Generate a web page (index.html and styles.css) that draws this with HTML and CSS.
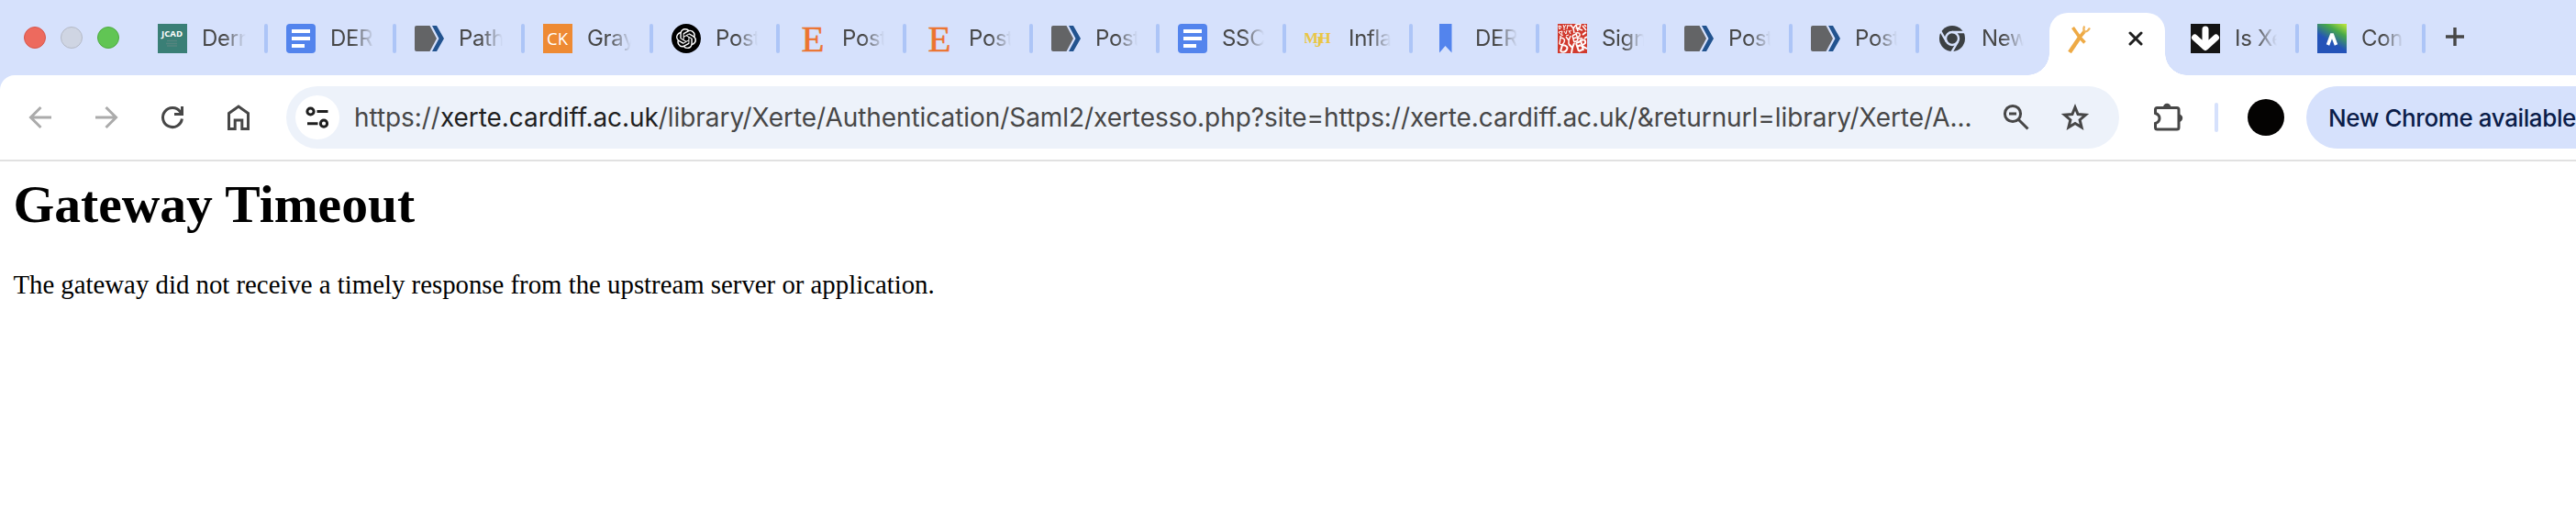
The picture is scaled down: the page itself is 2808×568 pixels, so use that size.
FILE: index.html
```html
<!DOCTYPE html>
<html lang="en">

<head>
    <meta charset="UTF-8" />
    <title>504 Gateway Timeout</title>
    <link rel="stylesheet" href="styles.css">
</head>

<body>
    <!-- icons used by more than one tab -->
    <svg class="defs" width="0" height="0">
        <symbol id="docs" viewBox="0 0 32 32">
            <rect width="32" height="32" rx="4" fill="#5384ed" />
            <path d="M6 8h20M6 16h20M6 24h14" stroke="#fff" stroke-width="4" />
        </symbol>
        <symbol id="pathway" viewBox="0 0 32 32">
            <path d="M2 2h14.500l7.500 14-7.500 14H2a2 2 0 0 1-2-2V4a2 2 0 0 1 2-2z" fill="#636466" />
            <path d="M19 2h5l8 14-8 14h-5l7.500-14z" fill="#22538f" />
        </symbol>
    </svg>

    <div class="tabStrip">
        <div class="windowButtons">
            <span class="light red"></span>
            <span class="light grey"></span>
            <span class="light green"></span>
        </div>
        <div class="tab wide">
            <svg class="favicon" viewBox="0 0 32 32">
                <rect width="32" height="32" fill="#3a7f76" />
                <text class="jcad" x="4" y="13.500" textLength="23" lengthAdjust="spacingAndGlyphs">JCAD</text>
                <path d="M10 18.500h11M9 21.500h12M10 24h11" stroke="#55857f" stroke-width="1.500" />
            </svg>
            <span class="title">Derm</span>
        </div>
        <div class="tab wide">
            <svg class="favicon"><use href="#docs" /></svg>
            <span class="title">DER</span>
        </div>
        <div class="tab wide">
            <svg class="favicon"><use href="#pathway" /></svg>
            <span class="title">Path</span>
        </div>
        <div class="tab wide">
            <svg class="favicon" viewBox="0 0 32 32">
                <rect width="32" height="32" fill="#ee8a33" />
                <text class="ck" x="4" y="22.500" textLength="23" lengthAdjust="spacingAndGlyphs">CK</text>
            </svg>
            <span class="title">Gray</span>
        </div>
        <div class="tab">
            <svg class="favicon" viewBox="0 0 32 32">
                <circle cx="16" cy="16" r="16" />
                <path fill="#fff" transform="translate(5 5) scale(.92)" d="M22.2819 9.8211a5.9847 5.9847 0 0 0-.5157-4.9108 6.0462 6.0462 0 0 0-6.5098-2.9A6.0651 6.0651 0 0 0 4.9807 4.1818a5.9847 5.9847 0 0 0-3.9977 2.9 6.0462 6.0462 0 0 0 .7427 7.0966 5.98 5.98 0 0 0 .511 4.9107 6.051 6.051 0 0 0 6.5146 2.9001A5.9847 5.9847 0 0 0 13.2599 24a6.0557 6.0557 0 0 0 5.7718-4.2058 5.9894 5.9894 0 0 0 3.9977-2.9001 6.0557 6.0557 0 0 0-.7475-7.0729zm-9.022 12.6081a4.4755 4.4755 0 0 1-2.8764-1.0408l.1419-.0804 4.7783-2.7582a.7948.7948 0 0 0 .3927-.6813v-6.7369l2.02 1.1686a.071.071 0 0 1 .038.052v5.5826a4.504 4.504 0 0 1-4.4945 4.4944zm-9.6607-4.1254a4.4708 4.4708 0 0 1-.5346-3.0137l.142.0852 4.783 2.7582a.7712.7712 0 0 0 .7806 0l5.8428-3.3685v2.3324a.0804.0804 0 0 1-.0332.0615L9.74 19.9502a4.4992 4.4992 0 0 1-6.1408-1.6464zM2.3408 7.8956a4.485 4.485 0 0 1 2.3655-1.9728V11.6a.7664.7664 0 0 0 .3879.6765l5.8144 3.3543-2.0201 1.1685a.0757.0757 0 0 1-.071 0l-4.8303-2.7865A4.504 4.504 0 0 1 2.3408 7.872zm16.5963 3.8558L13.1038 8.364 15.1192 7.2a.0757.0757 0 0 1 .071 0l4.8303 2.7913a4.4944 4.4944 0 0 1-.6765 8.1042v-5.6772a.79.79 0 0 0-.407-.667zm2.0107-3.0231l-.142-.0852-4.7735-2.7818a.7759.7759 0 0 0-.7854 0L9.409 9.2297V6.8974a.0662.0662 0 0 1 .0284-.0615l4.8303-2.7866a4.4992 4.4992 0 0 1 6.6802 4.66zM8.3065 12.863l-2.02-1.1638a.0804.0804 0 0 1-.038-.0567V6.0742a4.4992 4.4992 0 0 1 7.3757-3.4537l-.142.0805L8.704 5.459a.7948.7948 0 0 0-.3927.6813zm1.0976-2.3654l2.602-1.4998 2.6069 1.4998v2.9994l-2.5974 1.4997-2.6067-1.4997Z" />
            </svg>
            <span class="title">Post</span>
        </div>
        <div class="tab">
            <svg class="favicon" viewBox="0 0 32 32"><text class="elsevier" x="3.500" y="30" textLength="25" lengthAdjust="spacingAndGlyphs">E</text></svg>
            <span class="title">Post</span>
        </div>
        <div class="tab">
            <svg class="favicon" viewBox="0 0 32 32"><text class="elsevier" x="3.500" y="30" textLength="25" lengthAdjust="spacingAndGlyphs">E</text></svg>
            <span class="title">Post</span>
        </div>
        <div class="tab">
            <svg class="favicon"><use href="#pathway" /></svg>
            <span class="title">Post</span>
        </div>
        <div class="tab">
            <svg class="favicon"><use href="#docs" /></svg>
            <span class="title">SSC</span>
        </div>
        <div class="tab">
            <svg class="favicon" viewBox="0 0 32 32">
                <text class="mjh" x="-1" y="21">M</text>
                <text class="mjh" x="11" y="25">J</text>
                <text class="mjh" x="15.500" y="21">H</text>
            </svg>
            <span class="title">Infla</span>
        </div>
        <div class="tab">
            <svg class="favicon" viewBox="0 0 32 32"><path d="M9 0h13.500v31.500L15.500 24 9 31.500z" fill="#5384ed" /></svg>
            <span class="title">DER</span>
        </div>
        <div class="tab">
            <svg class="favicon" viewBox="0 0 32 32">
                <rect width="32" height="32" fill="#d13a2e" />
                <!-- scattered letters -->
                <g fill="none" stroke="#fff" stroke-width="1.500">
                    <path d="M1 2l3 1-2 3zM6 1l1 3 2-3M7 4v3M11 1l-1 5M11 2h3M1 9l4-1-1 4zM7 8l2 3 1-4M12 7l2 4M12 9l3-2M2 14l4-2M9 13l3-1" stroke-width="1" />
                    <path d="M14 1l3 4 3-4M17 5l1 5M22 8l-2-7 5-1-1 4-3 1 6 2M27 2l4 5M29 1l2 2" />
                    <path d="M2 22l1-7q6 1 4 5t-5 2M9 14l3 4 2-5M12 18v4M16 13l2 7M16 13l4-2M17 16l3-1M18 20l4-2M22 18l-2-8q5-1 4 3l-3 2 6 1" />
                    <path d="M3 30l2-7q7 1 5 5t-7 2M12 22l4 4 2-5M16 26l-1 6M20 21l3 9M20 21l5-2M21 25l4-2M23 30l4-2M28 29l-3-11q6-2 5 3l-4 3 6 3M27 12l4-3M29 16l3-2" stroke-width="2" />
                </g>
            </svg>
            <span class="title">Sign</span>
        </div>
        <div class="tab">
            <svg class="favicon"><use href="#pathway" /></svg>
            <span class="title">Post</span>
        </div>
        <div class="tab">
            <svg class="favicon"><use href="#pathway" /></svg>
            <span class="title">Post</span>
        </div>
        <div class="tab last">
            <svg class="favicon" viewBox="0 0 32 32">
                <circle cx="16" cy="16" r="14" fill="#3c4043" />
                <circle cx="16" cy="16" r="7" fill="none" stroke="#d6e1fc" stroke-width="2.400" />
                <path d="M16 9h13.500M9.900 19.500L3 7.500M22.100 19.500L15 31.500" stroke="#d6e1fc" stroke-width="2.400" />
            </svg>
            <span class="title">New</span>
        </div>
        <div class="tab active">
            <svg class="favicon" viewBox="0 0 32 32">
                <g fill="none" stroke="#eeaa45">
                    <path d="M6 31L17 14.700" stroke-width="4.400" />
                    <path d="M9.500 4L17 14.700l5.500 5.800M17 14.700l5-6.200" stroke-width="3.600" />
                    <path d="M22.200 2.500q-1.700 3-.2 6 3.500.5 6-4" stroke-width="2.200" stroke="#f1b65e" />
                </g>
            </svg>
            <svg class="close" viewBox="0 0 16 16"><path d="M2 2l12 12M14 2L2 14" stroke="#1f1f1f" stroke-width="3" stroke-linecap="round" /></svg>
        </div>
        <div class="tab">
            <svg class="favicon" viewBox="0 0 32 32">
                <rect width="32" height="32" fill="#141414" />
                <path d="M16 6v18M4.500 15L16 25.500 27.500 15" fill="none" stroke="#fff" stroke-width="7" stroke-linecap="round" stroke-linejoin="round" />
            </svg>
            <span class="title">Is Xe</span>
        </div>
        <div class="tab">
            <svg class="favicon" viewBox="0 0 32 32">
                <defs>
                    <linearGradient id="hill" x1=".3" y1="1" x2=".9" y2="0">
                        <stop offset=".35" stop-color="#2453b8" />
                        <stop offset=".72" stop-color="#47a84a" />
                        <stop offset="1" stop-color="#b4e23c" />
                    </linearGradient>
                </defs>
                <rect width="32" height="32" fill="url(#hill)" />
                <path d="M11.500 23l4.500-12 4.500 12" fill="none" stroke="#fff" stroke-width="3.600" stroke-linejoin="bevel" />
            </svg>
            <span class="title">Con</span>
        </div>
        <svg class="newTab" viewBox="0 0 20 20"><path d="M10 0v20M0 10h20" stroke="#474747" stroke-width="3.400" /></svg>
    </div>

    <div class="toolbar">
        <div class="nav">
            <svg class="icon dim" viewBox="0 0 40 40"><path d="M32 20H10M20.500 9L9.500 20l11 11" /></svg>
            <svg class="icon dim" viewBox="0 0 40 40"><path d="M8 20h22M19.500 9l11 11-11 11" /></svg>
            <svg class="icon" viewBox="0 0 40 40"><path d="M30.400 21.500A10.500 10.500 0 1 1 28.500 13.900L30.500 16.500M30.500 8v8.500H22" /></svg>
            <svg class="icon" viewBox="0 0 40 40"><path d="M9.500 32.500v-17L20 8l10.500 7.500v17h-6.700V23h-7.600v9.500z" /></svg>
        </div>
        <div class="omnibox">
            <span class="siteInfo">
                <svg class="icon dark" viewBox="0 0 40 40"><circle cx="12.500" cy="13.500" r="3.600" /><circle cx="27" cy="26.700" r="3.600" /><path d="M19.500 13.500h12M9 26.700h11.500" /></svg>
            </span>
            <span class="url">https://<b>xerte.cardiff.ac.uk</b>/library/Xerte/Authentication/Saml2/xertesso.php?site=https://xerte.cardiff.ac.uk/&amp;returnurl=library/Xerte/A...</span>
            <div class="actions">
                <svg class="icon" viewBox="0 0 40 40"><circle cx="17" cy="16" r="8.600" /><path d="M23.200 22.200L33.500 32.500M13 16h8" /></svg>
                <svg class="icon" viewBox="0 0 40 40"><path d="M20 9l3.100 7.600 8.400.7-6.400 5.400 2 8.100-7.100-4.300-7.100 4.300 2-8.100-6.400-5.400 8.400-.7z" /></svg>
            </div>
        </div>
        <svg class="icon puzzle" viewBox="0 0 40 40">
            <path d="M7.500 9.500h21.500a2 2 0 0 1 2 2V31a2 2 0 0 1-2 2H7.500a2 2 0 0 1-2-2v-4.500q4.500-1.500 4.500-5.500t-4.500-5.500v-4a2 2 0 0 1 2-2z" />
            <path class="knob" d="M14 9a4.200 4.200 0 0 1 8.400 0zM31 16.500a4.200 4.200 0 0 1 0 8.400z" />
        </svg>
        <span class="divider"></span>
        <span class="avatar"></span>
        <div class="update">New Chrome available</div>
    </div>

    <div class="page">
        <h1>Gateway Timeout</h1>
        <p>The gateway did not receive a timely response from the upstream server or application.</p>
    </div>
</body>

</html>
```
FILE: styles.css
```css
* {
    box-sizing: border-box;
}
body {
    margin: 0;
    height: 568px;
    overflow: hidden;
    background: #d6e1fc;
    font-family: Inter, "Liberation Sans", sans-serif;
    color: #474747;
}
svg {
    display: block;
    flex: none;
}
.defs {
    position: absolute;
}

/* tabs */
.tabStrip {
    display: flex;
    height: 82px;
}
.windowButtons {
    display: flex;
    flex: none;
    gap: 16px;
    width: 172px;
    padding: 29px 0 0 26px;
}
.light {
    width: 24px;
    height: 24px;
    border: 1px solid;
    border-radius: 50%;
}
.red {
    background: #ed6a5e;
    border-color: #d7564b;
}
.grey {
    background: #cfd5e3;
    border-color: #b4b9c6;
}
.green {
    background: #61c554;
    border-color: #4eab41;
}
.tab {
    display: flex;
    flex: none;
    width: 138px;
    padding-top: 26px;
}
.tab.wide {
    width: 140px;
}
.tab::after {
    content: "";
    width: 4px;
    height: 32px;
    margin: 0 20px;
    border-radius: 2px;
    background: #adc5f7;
}
.tab.last::after {
    visibility: hidden;
}
.favicon {
    width: 32px;
    height: 32px;
}
.title {
    flex: 1;
    min-width: 0;
    margin-left: 16px;
    overflow: hidden;
    font-size: 24px;
    line-height: 31px;
    letter-spacing: -0.3px;
    white-space: nowrap;
    -webkit-mask-image: linear-gradient(to right, #000 50%, transparent);
    mask-image: linear-gradient(to right, #000 50%, transparent);
}
.tab.active {
    position: relative;
    width: 126px;
    height: 68px;
    margin: 14px 28px 0 -16px;
    padding: 12px 0 0 16px;
    border-radius: 20px 20px 0 0;
    background: #fff;
}
/* the curved feet on both sides of the active tab */
.tab.active::before,
.tab.active::after {
    content: "";
    position: absolute;
    bottom: 0;
    width: 24px;
    height: 24px;
    margin: 0;
    border-radius: 0;
}
.tab.active::before {
    left: -24px;
    background: radial-gradient(circle at 0 0, transparent 23.5px, #fff 24px);
}
.tab.active::after {
    right: -24px;
    background: radial-gradient(circle at 100% 0, transparent 23.5px, #fff 24px);
}
.close {
    width: 16px;
    height: 16px;
    margin: 8px 0 0 38px;
}
.newTab {
    width: 20px;
    height: 20px;
    margin: 30px 0 0 2px;
}
.jcad {
    font: bold 9px "Open Sans", sans-serif;
    fill: #fff;
}
.ck {
    font: 18px "Open Sans", sans-serif;
    fill: #fff;
}
.elsevier {
    font: 40px "Liberation Serif", serif;
    fill: #ec7430;
    stroke: #ec7430;
    stroke-width: 0.6px;
}
.mjh {
    font: bold 17px "Liberation Serif", serif;
    fill: #eac645;
}

/* toolbar */
.toolbar {
    display: flex;
    align-items: center;
    height: 94px;
    border-bottom: 2px solid #e1e1e1;
    border-radius: 16px 0 0 0;
    background: #fff;
    overflow: hidden;
}
.nav {
    display: flex;
    flex: none;
    gap: 32px;
    width: 312px;
    padding-left: 24px;
}
.icon {
    width: 40px;
    height: 40px;
    fill: none;
    stroke: #474747;
    stroke-width: 3;
}
.icon.dim {
    stroke: #ababab;
}
.icon.dark {
    stroke: #1f1f1f;
}
.omnibox {
    display: flex;
    flex: none;
    align-items: center;
    width: 1998px;
    height: 68px;
    padding: 0 28px 0 10px;
    border-radius: 34px;
    background: #edf2fa;
}
.siteInfo {
    display: flex;
    align-items: center;
    justify-content: center;
    width: 48px;
    height: 48px;
    border-radius: 50%;
    background: #fff;
}
.url {
    margin-left: 16px;
    font-size: 28px;
    letter-spacing: -0.06px;
    white-space: nowrap;
}
.url b {
    font-weight: normal;
    color: #1f1f1f;
}
.actions {
    display: flex;
    gap: 25px;
    margin-left: auto;
}
.puzzle {
    margin-left: 34px;
}
.knob {
    fill: #474747;
    stroke-width: 0;
}
.divider {
    flex: none;
    width: 4px;
    height: 32px;
    margin-left: 30px;
    border-radius: 2px;
    background: #d6e1fc;
}
.avatar {
    flex: none;
    width: 40px;
    height: 40px;
    margin: 0 24px 0 32px;
    border-radius: 50%;
    background: #040302;
}
.update {
    flex: none;
    width: 400px;
    height: 68px;
    padding-left: 24px;
    border-radius: 34px;
    background: #d6e1fc;
    color: #0b1d49;
    font-size: 26px;
    font-weight: 500;
    line-height: 69px;
    letter-spacing: -0.4px;
    white-space: nowrap;
}

/* page content, shown at 90% zoom */
.page {
    display: flow-root;
    height: 392px;
    padding: 14.4px;
    background: #fff;
    color: #000;
    font-family: "Liberation Serif", serif;
    font-size: 28.8px;
}
.page h1 {
    margin: 0 0 38.6px;
    font-size: 57.6px;
}
.page p {
    margin: 0;
}
```
